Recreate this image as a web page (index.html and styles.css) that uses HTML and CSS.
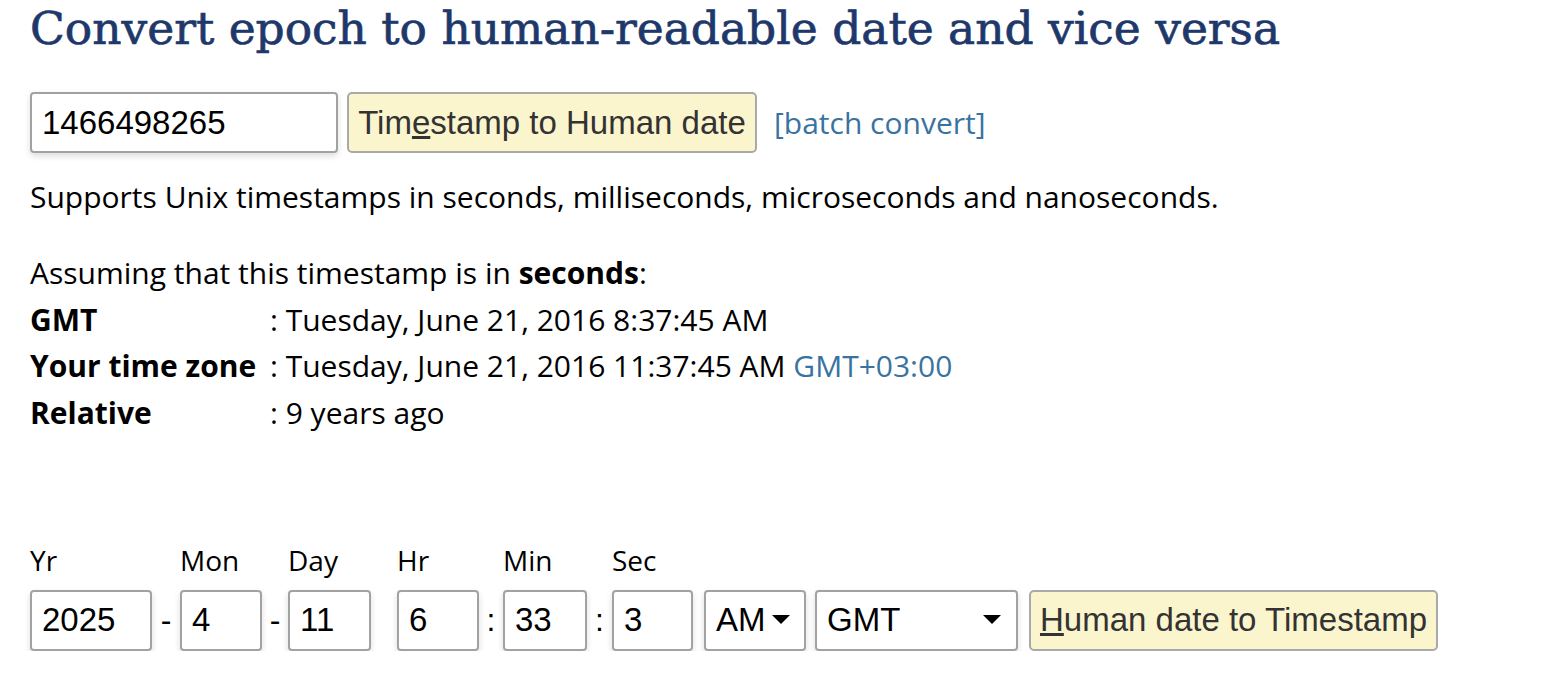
FILE: index.html
```html
<!DOCTYPE html>
<html>
<head>
<meta charset="utf-8">
<link rel="stylesheet" href="styles.css">
</head>
<body>
<h1 class="title">Convert epoch to human-readable date and vice versa</h1>
<div class="row-top">
  <input class="field field-ts" type="text" value="1466498265">
  <button class="btn btn-ts">Tim<u>e</u>stamp to Human date</button>
  <a class="link" href="#">[batch convert]</a>
</div>
<p class="note">Supports Unix timestamps in seconds, milliseconds, microseconds and nanoseconds.</p>
<div class="result">
  <div class="result-head">Assuming that this timestamp is in <b>seconds</b>:</div>
  <div class="result-grid">
    <b>GMT</b><span>: Tuesday, June 21, 2016 8:37:45 AM</span>
    <b>Your time zone</b><span>: Tuesday, June 21, 2016 11:37:45 AM <a class="link" href="#">GMT+03:00</a></span>
    <b>Relative</b><span>: 9 years ago</span>
  </div>
</div>
<div class="human">
  <div class="grp">
    <label class="lbl">Yr</label>
    <div class="ctl"><input class="field f-yr" type="text" value="2025"></div>
  </div>
  <span class="sep sep-a">-</span>
  <div class="grp">
    <label class="lbl">Mon</label>
    <div class="ctl"><input class="field f-mon" type="text" value="4"></div>
  </div>
  <span class="sep sep-b">-</span>
  <div class="grp">
    <label class="lbl">Day</label>
    <div class="ctl"><input class="field f-day" type="text" value="11"></div>
  </div>
  <span class="sep sep-b"></span>
  <div class="grp">
    <label class="lbl">Hr</label>
    <div class="ctl"><input class="field f-hr" type="text" value="6"></div>
  </div>
  <span class="sep sep-c">:</span>
  <div class="grp">
    <label class="lbl">Min</label>
    <div class="ctl"><input class="field f-min" type="text" value="33"></div>
  </div>
  <span class="sep sep-d">:</span>
  <div class="grp">
    <label class="lbl">Sec</label>
    <div class="ctl"><input class="field f-sec" type="text" value="3"></div>
  </div>
  <div class="grp">
    <span class="lbl">&nbsp;</span>
    <div class="ctl sel sel-ampm"><span>AM</span><svg class="caret" width="18" height="10" viewBox="0 0 18 10"><path d="M0 0H18L9 9Z" fill="#000"/></svg></div>
  </div>
  <div class="grp">
    <span class="lbl">&nbsp;</span>
    <div class="ctl sel sel-tz"><span>GMT</span><svg class="caret" width="18" height="10" viewBox="0 0 18 10"><path d="M0 0H18L9 9Z" fill="#000"/></svg></div>
  </div>
  <div class="grp">
    <span class="lbl">&nbsp;</span>
    <button class="btn btn-hd"><u>H</u>uman date to Timestamp</button>
  </div>
</div>
</body>
</html>
```
FILE: styles.css
```css
html, body {
  margin: 0;
  padding: 0;
  background: #fff;
}
body {
  padding: 0 30px;
  font-family: "Open Sans", "Liberation Sans", sans-serif;
  font-size: 30px;
  color: #000;
}
.title {
  margin: 0;
  height: 60px;
  line-height: 58px;
  font-family: "DejaVu Serif", "Liberation Serif", serif;
  font-weight: 400;
  font-size: 45.5px;
  color: #1e386b;
  -webkit-text-stroke: 0.7px #1e386b;
  white-space: nowrap;
}
.row-top {
  margin-top: 32px;
  display: flex;
  align-items: center;
}
.field {
  box-sizing: border-box;
  height: 61px;
  border: 2px solid #a2a2a2;
  border-radius: 4px;
  padding: 0 10px;
  font-family: "Liberation Sans", Arial, sans-serif;
  font-size: 33px;
  color: #000;
  background: #fff;
  box-shadow: 0 3px 6px rgba(0, 0, 0, 0.14);
  outline: none;
}
.field-ts {
  width: 308px;
}
.btn {
  box-sizing: border-box;
  height: 61px;
  border: 2px solid #a9a9a9;
  border-radius: 5px;
  background: #fbf5cd;
  color: #333;
  font-family: "Liberation Sans", Arial, sans-serif;
  font-size: 33px;
  padding: 0 8px;
  white-space: nowrap;
}
.btn-ts {
  margin-left: 9px;
  width: 410px;
}
.link {
  color: #3a73a0;
  text-decoration: none;
}
.row-top .link {
  margin-left: 17px;
}
.note {
  margin: 21px 0 0;
  line-height: 46.8px;
}
.result {
  margin-top: 29px;
  line-height: 46.8px;
}
.result-grid {
  display: grid;
  grid-template-columns: 240px 1fr;
}
.result-grid b {
  font-weight: 700;
}
.human {
  margin-top: 108px;
  display: flex;
  align-items: flex-end;
}
.grp {
  display: flex;
  flex-direction: column;
}
.lbl {
  font-family: "Open Sans", "Liberation Sans", sans-serif;
  font-size: 28px;
  line-height: 30px;
  margin-bottom: 15px;
  color: #000;
  white-space: nowrap;
}
.ctl {
  display: flex;
}
.f-yr { width: 122px; }
.f-mon { width: 82px; }
.f-day { width: 83px; }
.f-hr { width: 82px; }
.f-min { width: 84px; }
.f-sec { width: 81px; }
.sep {
  font-family: "Liberation Sans", Arial, sans-serif;
  font-size: 32px;
  height: 61px;
  line-height: 61px;
  text-align: center;
}
.sep-a { width: 28px; }
.sep-b { width: 26px; }
.sep-c { width: 24px; }
.sep-d { width: 25px; }
.sel {
  box-sizing: border-box;
  height: 61px;
  border: 2px solid #a2a2a2;
  border-radius: 4px;
  background: #fff;
  box-shadow: 0 3px 6px rgba(0, 0, 0, 0.14);
  align-items: center;
  font-family: "Liberation Sans", Arial, sans-serif;
  font-size: 33px;
  padding: 0 14px 0 10px;
  justify-content: space-between;
}
.sel-ampm {
  margin-left: 11px;
  width: 102px;
  padding-right: 14px;
}
.sel-tz {
  margin-left: 9px;
  width: 203px;
  padding-right: 15px;
}
.caret {
  display: block;
}
.btn-hd {
  margin-left: 11px;
  width: 409px;
}
```
